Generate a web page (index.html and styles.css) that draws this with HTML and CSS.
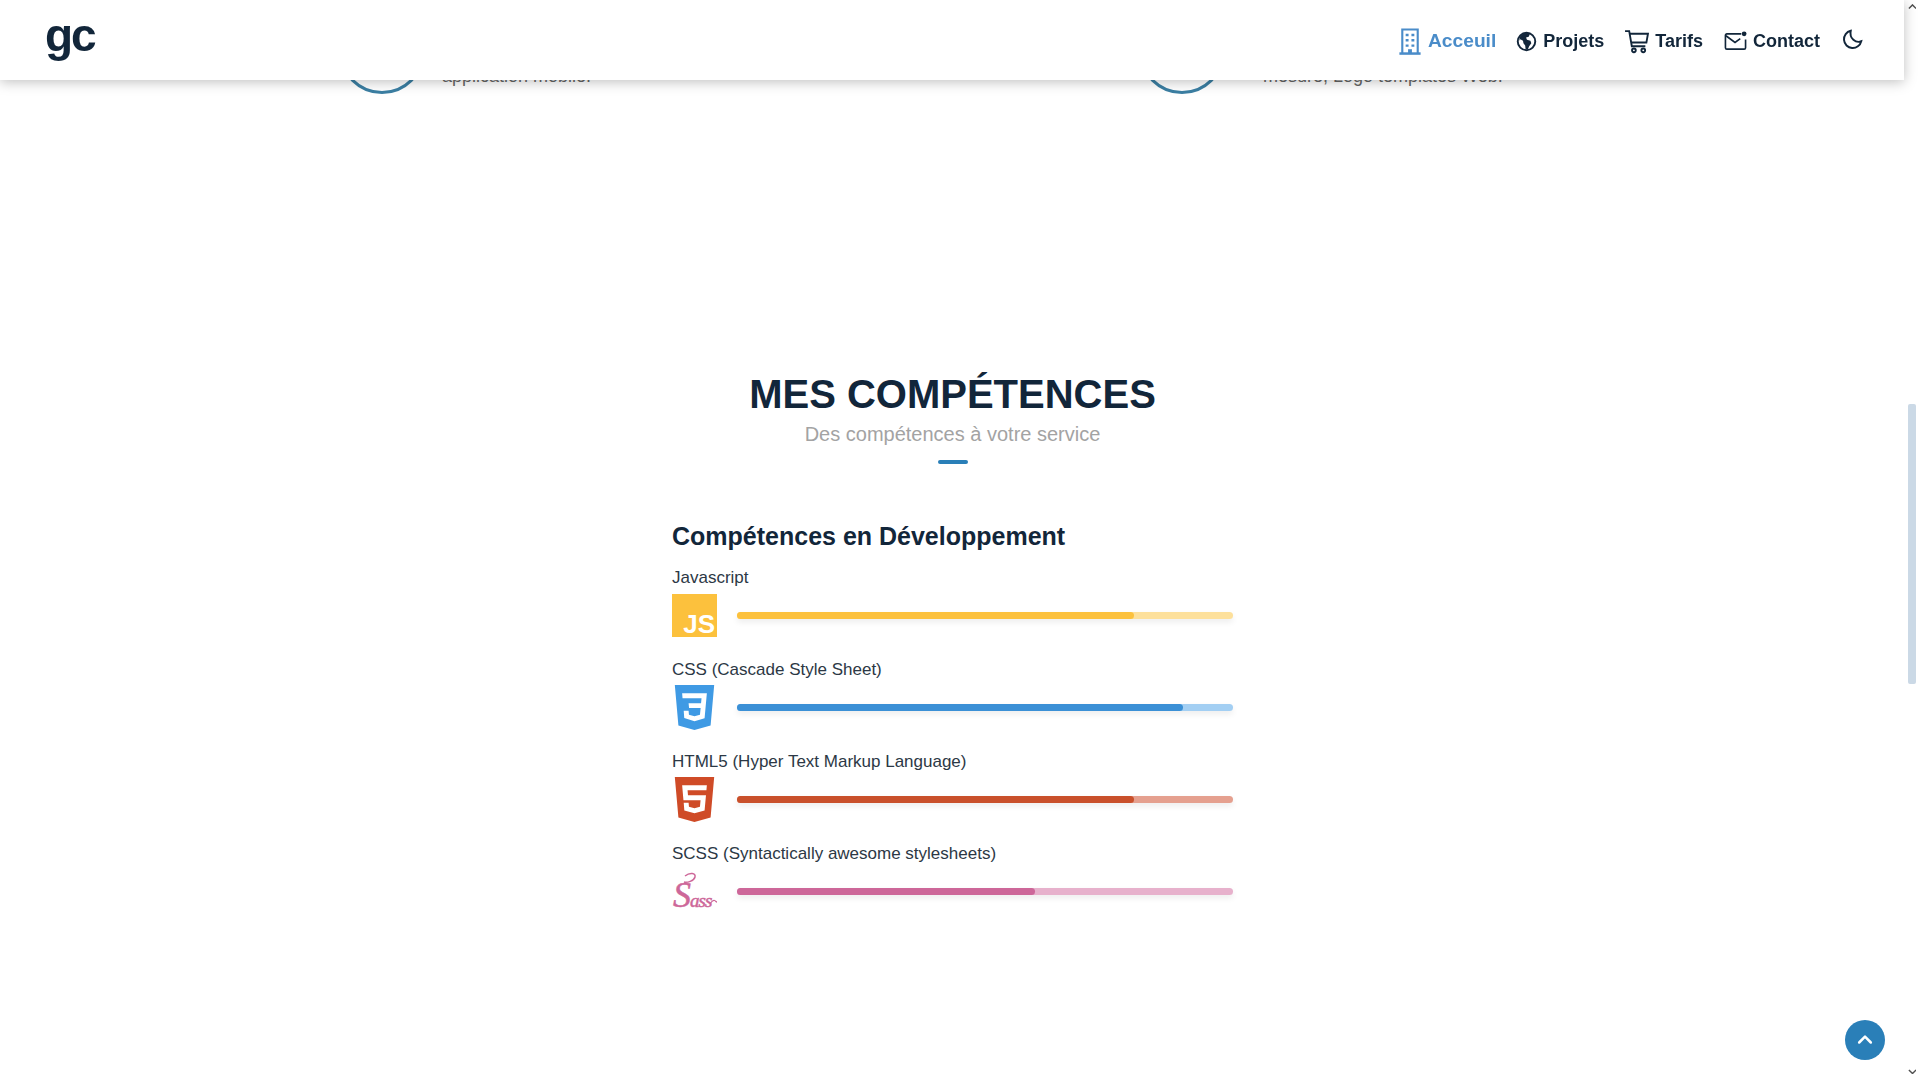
FILE: index.html
```html
<!DOCTYPE html>
<html lang="fr">
<head>
    <meta charset="UTF-8">
    <meta name="viewport" content="width=device-width, initial-scale=1.0">
    <title>Portfolio</title>
    <link rel="stylesheet" href="styles.css">
</head>
<body>
    <div class="page">
        <header class="site-header">
            <span class="logo">gc</span>
            <nav class="nav">
                <a class="nav-link active" href="#">
                    <svg class="nav-icon icon-building" viewBox="0 0 24 28" fill="none" stroke="currentColor" stroke-width="2.200">
                        <path d="M4 27V1.500h16V27"/>
                        <path d="M1 26.500h22" stroke-width="2.600"/>
                        <path d="M9 6v2.500M15 6v2.500M9 11.500v2.500M15 11.500v2.500M9 17v2.500M15 17v2.500" stroke-width="3"/>
                        <path d="M12 22v4" stroke-width="4"/>
                    </svg>
                    Acceuil
                </a>
                <a class="nav-link" href="#">
                    <svg class="nav-icon icon-globe" viewBox="0 0 24 24" fill="none" stroke="currentColor" stroke-width="2.200">
                        <circle cx="12" cy="12" r="10"/>
                        <path fill="currentColor" stroke="none" d="M4 7C7 2.500 12 1.500 16 3l-1.500 3.500-3 1 1 2.500 4 1 1 3-2.500 3.500-1.500 3.500h-2.500l-.5-4.500-2-2.500-.5-3-3-1.500L4 11z"/>
                    </svg>
                    Projets
                </a>
                <a class="nav-link link-tarifs" href="#">
                    <svg class="nav-icon icon-cart" viewBox="0 0 24 24" fill="none" stroke="currentColor" stroke-width="1.800">
                        <path d="M1 2h4l2.500 14.500h13"/>
                        <path d="M5.500 4.500h17.500l-1.500 8.500H7"/>
                        <circle cx="9.500" cy="20.500" r="1.800"/>
                        <circle cx="18.500" cy="20.500" r="1.800"/>
                    </svg>
                    Tarifs
                </a>
                <a class="nav-link" href="#">
                    <svg class="nav-icon" viewBox="0 0 24 24" fill="none" stroke="currentColor" stroke-width="1.700">
                        <path d="M18 4H3a1.500 1.500 0 0 0-1.500 1.500v13A1.500 1.500 0 0 0 3 20h18a1.500 1.500 0 0 0 1.500-1.500V10"/>
                        <path d="M2 6l9.500 7L17 9"/>
                        <circle cx="21" cy="4" r="2.500" fill="currentColor" stroke="none"/>
                    </svg>
                    Contact
                </a>
                <button class="theme-btn" type="button" aria-label="Mode sombre">
                    <svg viewBox="0 0 24 24" fill="none" stroke="currentColor" stroke-width="2.200">
                        <path d="M10 2a10 10 0 1 0 12 12c-6 2.500-14-3-12-12z"/>
                    </svg>
                </button>
            </nav>
        </header>

        <main class="content">
            <!-- Services, mostly scrolled under the header -->
            <div class="services">
                <div class="service">
                    <span class="service-circle"></span>
                    <p class="service-text">application mobile.</p>
                </div>
                <div class="service">
                    <span class="service-circle"></span>
                    <p class="service-text">mesure, Logo templates Web.</p>
                </div>
            </div>

            <section class="skills">
                <h2 class="section-title">MES COMPÉTENCES</h2>
                <p class="section-subtitle">Des compétences à votre service</p>
                <span class="section-rule"></span>

                <div class="skills-list">
                    <h3 class="skills-title">Compétences en Développement</h3>

                    <div class="skill">
                        <span class="skill-name">Javascript</span>
                        <div class="skill-row">
                            <svg class="skill-icon" viewBox="0 0 45 45">
                                <rect y="1" width="45" height="43" fill="#fcc13d"/>
                                <text class="js-mark" x="43" y="40" text-anchor="end">JS</text>
                            </svg>
                            <div class="bar bar-js"><div class="bar-fill" style="width: 80%"></div></div>
                        </div>
                    </div>

                    <div class="skill">
                        <span class="skill-name">CSS (Cascade Style Sheet)</span>
                        <div class="skill-row">
                            <svg class="skill-icon" viewBox="0 0 24 24">
                                <path fill="#3f9ae4" d="M1.500 0h21l-1.910 21.563L11.977 24l-8.565-2.438L1.500 0zm17.090 4.413L5.410 4.410l.213 2.622 10.125.002-.255 2.716h-6.640l.240 2.573h6.182l-.366 3.523-2.910.804-2.956-.810-.188-2.110h-2.610l.290 3.855L12 19.288l5.373-1.530L18.590 4.414z"/>
                            </svg>
                            <div class="bar bar-css"><div class="bar-fill" style="width: 90%"></div></div>
                        </div>
                    </div>

                    <div class="skill">
                        <span class="skill-name">HTML5 (Hyper Text Markup Language)</span>
                        <div class="skill-row">
                            <svg class="skill-icon" viewBox="0 0 24 24">
                                <path fill="#cf4b27" d="M1.500 0h21l-1.910 21.563L11.977 24l-8.564-2.438L1.500 0zm7.031 9.750l-.232-2.718 10.059.003.230-2.622L5.412 4.410l.698 8.010h9.126l-.326 3.426-2.910.804-2.955-.810-.188-2.110H6.248l.330 4.171L12 19.351l5.379-1.443.744-8.157H8.531z"/>
                            </svg>
                            <div class="bar bar-html"><div class="bar-fill" style="width: 80%"></div></div>
                        </div>
                    </div>

                    <div class="skill">
                        <span class="skill-name">SCSS (Syntactically awesome stylesheets)</span>
                        <div class="skill-row">
                            <svg class="skill-icon" viewBox="0 0 45 45">
                                <text class="sass-mark" x="1" y="38"><tspan class="sass-cap">S</tspan>ass</text>
                                <path d="M13 7c5-4 11-3 10 1s-8 6-11 5" fill="none" stroke="#cd6799" stroke-width="1.500"/>
                                <path d="M38 35c2-3 3-4 4.500-3.500s1.500 1.500 2.500 1.500" fill="none" stroke="#cd6799" stroke-width="1.300"/>
                            </svg>
                            <div class="bar bar-sass"><div class="bar-fill" style="width: 60%"></div></div>
                        </div>
                    </div>
                </div>
            </section>
        </main>

        <button class="to-top" type="button" aria-label="Haut de page">
            <svg viewBox="0 0 24 24" fill="none" stroke="currentColor" stroke-width="3" stroke-linecap="round" stroke-linejoin="round">
                <path d="M5 15l7-7 7 7"/>
            </svg>
        </button>

        <div class="scrollbar">
            <span class="scroll-arrow"><svg viewBox="0 0 10 6"><path d="M1 5l4-4 4 4" fill="none" stroke="#505050" stroke-width="1.600"/></svg></span>
            <span class="scroll-thumb"></span>
            <span class="scroll-arrow scroll-arrow-down"><svg viewBox="0 0 10 6"><path d="M1 1l4 4 4-4" fill="none" stroke="#505050" stroke-width="1.600"/></svg></span>
        </div>
    </div>
</body>
</html>
```

FILE: styles.css
```css
body {
    margin: 0;
    font-family: "Liberation Sans", Arial, sans-serif;
    background-color: #fff;
    color: #12263a;
    overflow: hidden;
}

.page {
    display: flex;
    height: 1079px;
    overflow: hidden;
}

/* Header sits over the scrolled content */
.site-header {
    position: fixed;
    top: 0;
    left: 0;
    width: 1904px;
    height: 80px;
    box-sizing: border-box;
    padding: 2px 41px 0 45px;
    display: flex;
    align-items: center;
    justify-content: space-between;
    background-color: #fff;
    box-shadow: 0 2px 12px rgba(0, 0, 0, 0.25);
    z-index: 10;
}

.logo {
    font-size: 46px;
    font-weight: bold;
    letter-spacing: -2px;
    line-height: 1;
    margin-top: -12px;
}

.nav {
    display: flex;
    align-items: center;
}

.nav-link {
    display: flex;
    align-items: center;
    gap: 6px;
    margin-right: 20px;
    font-size: 18px;
    font-weight: bold;
    color: #12263a;
    text-decoration: none;
}

.nav-link.link-tarifs {
    margin-right: 21px;
}

.nav-link.active {
    margin-right: 20px;
    font-size: 19.2px;
    color: #4a8cc9;
}

.nav-icon {
    width: 23px;
    height: 23px;
}

.icon-building {
    width: 24px;
    height: 27px;
}

.icon-globe {
    width: 21px;
    height: 21px;
}

.icon-cart {
    width: 25px;
    height: 25px;
}

.theme-btn {
    width: 21px;
    height: 21px;
    margin: -3px 0 0 2px;
    padding: 0;
    border: none;
    background: none;
    color: #12263a;
}

/* Main column */
.content {
    width: 1905px;
    flex-shrink: 0;
}

.services {
    display: grid;
    grid-template-columns: 800px 1fr;
    margin-top: 8px;
    padding-left: 339px;
}

.service {
    display: flex;
    align-items: flex-end;
    gap: 17px;
}

.service:last-child {
    gap: 38px;
}

.service-circle {
    width: 86px;
    height: 86px;
    box-sizing: border-box;
    border: 3px solid #3b7fa3;
    border-radius: 50%;
}

.service-text {
    margin: 0 0 6px;
    font-size: 18px;
    line-height: 24px;
    color: #666;
}

.skills {
    display: flex;
    flex-direction: column;
    align-items: center;
    margin-top: 277px;
}

.section-title {
    margin: 0;
    font-size: 40px;
    line-height: 46px;
    color: #12263a;
}

.section-subtitle {
    margin: 5px 0 0;
    font-size: 20px;
    line-height: 24px;
    color: #a3a3a3;
}

.section-rule {
    width: 30px;
    height: 4px;
    margin-top: 14px;
    border-radius: 2px;
    background-color: #2a7fb8;
}

.skills-list {
    width: 561px;
    margin-top: 57px;
}

.skills-title {
    margin: 0 0 15px;
    font-size: 25px;
    line-height: 30px;
    color: #12263a;
}

.skill {
    margin-bottom: 20px;
}

.skill-name {
    display: block;
    font-size: 17px;
    line-height: 24px;
    margin-bottom: 3px;
    color: #2c3845;
}

.skill-row {
    display: flex;
    align-items: center;
    gap: 20px;
}

.skill-icon {
    width: 45px;
    height: 45px;
    flex-shrink: 0;
}

.js-mark {
    font-family: "Liberation Sans", Arial, sans-serif;
    font-size: 26px;
    font-weight: bold;
    fill: #fff;
}

.sass-mark {
    font-family: "Liberation Serif", serif;
    font-size: 19px;
    font-style: italic;
    letter-spacing: -1px;
    fill: #cd6799;
    stroke: #cd6799;
    stroke-width: 0.5px;
}

.sass-cap {
    font-size: 36px;
}

.bar {
    flex: 1;
    height: 7px;
    border-radius: 4px;
    box-shadow: 0 3px 6px rgba(0, 0, 0, 0.08);
}

.bar-fill {
    height: 100%;
    border-radius: 4px;
}

.bar-js { background-color: #fde09b; }
.bar-js .bar-fill { background-color: #fcc13d; }

.bar-css { background-color: #a3cff3; }
.bar-css .bar-fill { background-color: #3b90d6; }

.bar-html { background-color: #e5a08f; }
.bar-html .bar-fill { background-color: #c9502b; }

.bar-sass { background-color: #e7b1cc; }
.bar-sass .bar-fill { background-color: #cd6799; }

/* Back to top button */
.to-top {
    position: fixed;
    left: 1845px;
    top: 1020px;
    width: 40px;
    height: 40px;
    padding: 10px;
    border: none;
    border-radius: 50%;
    background-color: #2a7fb8;
    color: #fff;
}

.to-top svg {
    display: block;
}

/* Window scrollbar */
.scrollbar {
    width: 14px;
    flex-shrink: 0;
    display: flex;
    flex-direction: column;
    align-items: center;
}

.scroll-arrow {
    display: block;
    width: 9px;
    height: 6px;
    margin-top: 4px;
}

.scroll-arrow svg {
    display: block;
}

.scroll-arrow-down {
    margin-top: auto;
    margin-bottom: 4px;
}

.scroll-thumb {
    width: 8px;
    height: 280px;
    margin-top: 394px;
    border-radius: 2px;
    background-color: #cbd9e6;
}
```
